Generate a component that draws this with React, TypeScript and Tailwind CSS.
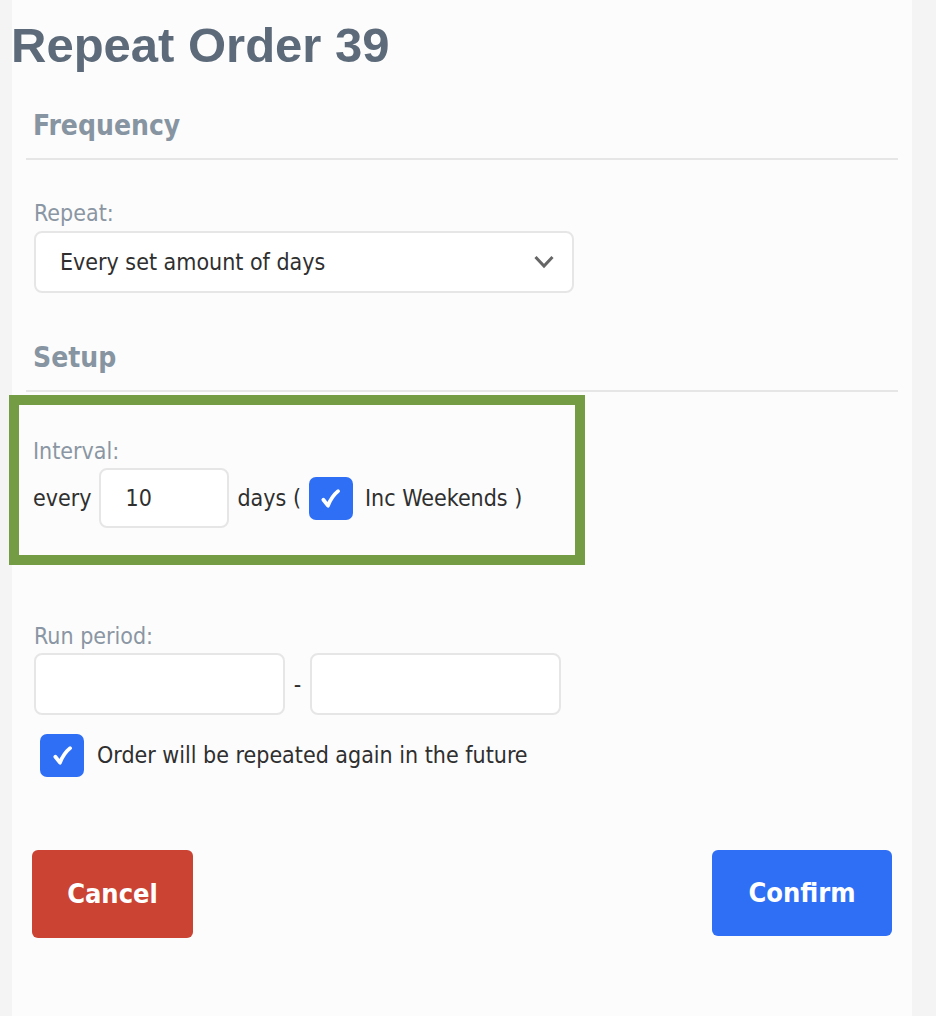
import { useState } from 'react'

const body = "font-['DejaVu_Sans_Condensed','DejaVu_Sans',sans-serif]"

function Check() {
  return (
    <svg viewBox="0 0 20 20" className="h-[21px] w-[21px]">
      <path
        d="M3.2 11.2 L7.6 16.8 C9.8 11 12.8 6.6 17.2 3"
        fill="none"
        stroke="white"
        strokeWidth="3.6"
        strokeLinecap="round"
        strokeLinejoin="round"
      />
    </svg>
  )
}

function CheckBox({ checked, onToggle }: { checked: boolean; onToggle: () => void }) {
  return (
    <button
      type="button"
      onClick={onToggle}
      className={`flex h-[43px] w-[44px] shrink-0 items-center justify-center rounded-[7px] ${checked ? 'bg-[#2f6ff6]' : 'border-2 border-[#e5e5e5] bg-white'}`}
    >
      {checked && <Check />}
    </button>
  )
}

export default function App() {
  const [weekends, setWeekends] = useState(true)
  const [future, setFuture] = useState(true)

  return (
    <div className="min-h-screen bg-[#f4f4f4]">
      <div className={`ml-[12px] min-h-[1016px] w-[900px] bg-[#fcfcfc] ${body}`}>
        <h1 className="-ml-[1px] pt-[21px] font-['Liberation_Sans',Arial,sans-serif] text-[49px] font-bold leading-[48px] text-[#5c6a79]">
          Repeat Order 39
        </h1>

        <div className="ml-[14px] w-[872px]">
          {/* Frequency */}
          <h2 className="mt-[41px] border-b-2 border-[#e6e6e6] pb-[16px] pl-[7px] text-[28px] font-bold leading-[32px] text-[#8794a1]">
            Frequency
          </h2>
          <div className="pl-[8px]">
            <label className="mt-[40px] block text-[23px] leading-[26px] text-[#8a96a3]">Repeat:</label>
            <div className="mt-[5px] flex h-[62px] w-[540px] items-center justify-between rounded-[8px] border-2 border-[#e6e6e6] bg-white pl-[24px] pr-[18px] text-[23px] text-[#2f2f2f]">
              <span>Every set amount of days</span>
              <svg viewBox="0 0 20 14" className="h-[14px] w-[20px]">
                <polyline points="1.5,2 10,11 18.5,2" fill="none" stroke="#666" strokeWidth="3" />
              </svg>
            </div>
          </div>

          {/* Setup */}
          <h2 className="mt-[49px] border-b-2 border-[#e6e6e6] pb-[16px] pl-[7px] text-[28px] font-bold leading-[32px] text-[#8794a1]">
            Setup
          </h2>

          <div className="-ml-[17px] mt-[3px] w-[576px] border-[10px] border-[#739c45] pb-[27px] pl-[14px] pt-[33px]">
            <label className="block text-[23px] leading-[26px] text-[#8a96a3]">Interval:</label>
            <div className="mt-[4px] flex items-center gap-[8px] text-[23px] text-[#2f2f2f]">
              <span>every</span>
              <input
                defaultValue="10"
                className="h-[60px] w-[130px] rounded-[8px] border-2 border-[#e6e6e6] bg-white pl-[24px] text-[23px] text-[#2f2f2f] outline-none"
              />
              <span>days (</span>
              <CheckBox checked={weekends} onToggle={() => setWeekends(!weekends)} />
              <span className="ml-[4px]">Inc Weekends )</span>
            </div>
          </div>

          <div className="pl-[8px]">
            <label className="mt-[58px] block text-[23px] leading-[26px] text-[#8a96a3]">Run period:</label>
            <div className="mt-[4px] flex items-center">
              <input className="h-[62px] w-[251px] rounded-[8px] border-2 border-[#e6e6e6] bg-white outline-none" />
              <span className="w-[25px] text-center text-[23px] text-[#2f2f2f]">-</span>
              <input className="h-[62px] w-[251px] rounded-[8px] border-2 border-[#e6e6e6] bg-white outline-none" />
            </div>
            <div className="ml-[6px] mt-[19px] flex items-center gap-[13px] text-[23px] text-[#2f2f2f]">
              <CheckBox checked={future} onToggle={() => setFuture(!future)} />
              <span>Order will be repeated again in the future</span>
            </div>
          </div>
        </div>

        <div className="mt-[73px] flex items-start justify-between px-[20px]">
          <button className="h-[88px] w-[161px] rounded-[6px] bg-[#cb4433] text-[27px] font-bold text-white">Cancel</button>
          <button className="h-[86px] w-[180px] rounded-[6px] bg-[#2f6ff6] text-[27px] font-bold text-white">Confirm</button>
        </div>
      </div>
    </div>
  )
}
